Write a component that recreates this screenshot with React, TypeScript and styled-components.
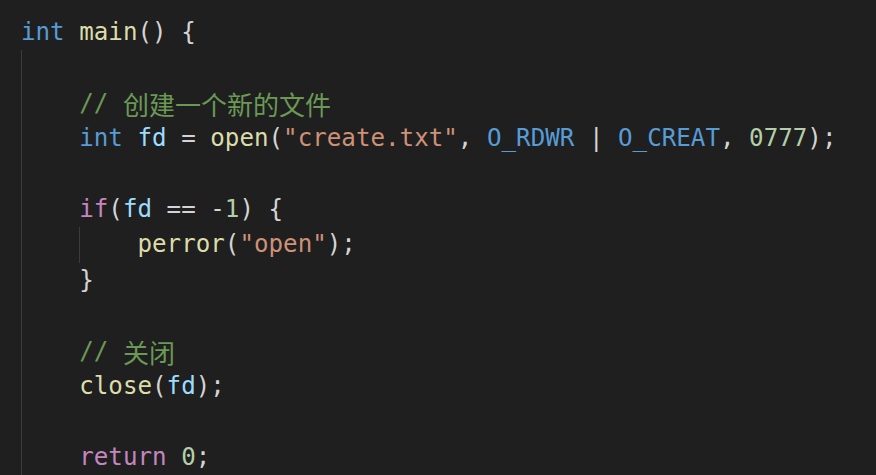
import React from "react";
import styled, { createGlobalStyle } from "styled-components";

const Global = createGlobalStyle`
  html, body { margin: 0; padding: 0; background: #1f1f1f; }
  body { overflow: hidden; }
`;

const Editor = styled.div`
  width: 876px;
  height: 475px;
  box-sizing: border-box;
  padding: 15px 0 0 21px;
  background: #1f1f1f;
  font-family: "DejaVu Sans Mono", "Liberation Mono", monospace;
  font-size: 24.2px;
  color: #d4d4d4;
  overflow: hidden;
`;

const Line = styled.div`
  display: flex;
  height: 35.4px;
  line-height: 35.4px;
  white-space: pre;
`;

const Indent = styled.span<{ $guide: boolean }>`
  box-sizing: border-box;
  flex: 0 0 auto;
  width: 4ch;
  height: 100%;
  border-left: 1px solid ${(p) => (p.$guide ? "#3c3c3c" : "transparent")};
`;

type Kind = "kw" | "ctrl" | "fn" | "var" | "str" | "num" | "cm" | "macro" | "p" | "cjk";

const colors: Record<Kind, string> = {
  kw: "#569cd6",
  ctrl: "#c586c0",
  fn: "#dcdcaa",
  var: "#9cdcfe",
  str: "#ce9178",
  num: "#b5cea8",
  cm: "#6a9955",
  macro: "#569cd6",
  p: "#d4d4d4",
  cjk: "#6a9955",
};

const Tok = styled.span<{ $k: Kind }>`
  color: ${(p) => colors[p.$k]};
`;

const Cjk = styled.span`
  color: #6a9955;
  font-family: "Noto Sans CJK SC", sans-serif;
  font-size: 26px;
`;

type T = [Kind, string];
type L = { indent: number; guides: boolean[]; toks: T[] };

const lines: L[] = [
  { indent: 0, guides: [], toks: [["kw", "int"], ["p", " "], ["fn", "main"], ["p", "() {"]] },
  { indent: 1, guides: [true], toks: [] },
  { indent: 1, guides: [true], toks: [["cm", "// "], ["cjk", "创建一个新的文件"]] },
  {
    indent: 1,
    guides: [true],
    toks: [
      ["kw", "int"], ["p", " "], ["var", "fd"], ["p", " = "], ["fn", "open"], ["p", "("],
      ["str", "\"create.txt\""], ["p", ", "], ["macro", "O_RDWR"], ["p", " | "],
      ["macro", "O_CREAT"], ["p", ", "], ["num", "0777"], ["p", ");"],
    ],
  },
  { indent: 1, guides: [true], toks: [] },
  {
    indent: 1,
    guides: [true],
    toks: [["ctrl", "if"], ["p", "("], ["var", "fd"], ["p", " == -"], ["num", "1"], ["p", ") {"]],
  },
  {
    indent: 2,
    guides: [true, true],
    toks: [["fn", "perror"], ["p", "("], ["str", "\"open\""], ["p", ");"]],
  },
  { indent: 1, guides: [true], toks: [["p", "}"]] },
  { indent: 1, guides: [true], toks: [] },
  { indent: 1, guides: [true], toks: [["cm", "// "], ["cjk", "关闭"]] },
  { indent: 1, guides: [true], toks: [["fn", "close"], ["p", "("], ["var", "fd"], ["p", ");"]] },
  { indent: 1, guides: [true], toks: [] },
  { indent: 1, guides: [true], toks: [["ctrl", "return"], ["p", " "], ["num", "0"], ["p", ";"]] },
];

export default function App() {
  return (
    <>
      <Global />
      <Editor>
        {lines.map((l, i) => (
          <Line key={i}>
            {Array.from({ length: l.indent }).map((_, j) => (
              <Indent key={j} $guide={l.guides[j]} />
            ))}
            {l.toks.map(([k, s], j) =>
              k === "cjk" ? (
                <Cjk key={j}>{s}</Cjk>
              ) : (
                <Tok key={j} $k={k}>
                  {s}
                </Tok>
              )
            )}
          </Line>
        ))}
      </Editor>
    </>
  );
}
